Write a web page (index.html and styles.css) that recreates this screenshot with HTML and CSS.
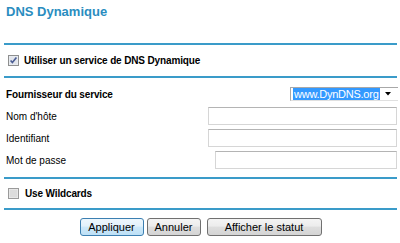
FILE: index.html
```html
<!DOCTYPE html>
<html lang="fr">
<head>
    <meta charset="UTF-8">
    <title>DNS Dynamique</title>
    <link rel="stylesheet" href="styles.css">
</head>
<body>
    <div class="page">
        <h1 class="title">DNS Dynamique</h1>

        <!-- Enable service -->
        <div class="section check-row">
            <svg class="checkbox" width="11" height="11" viewBox="0 0 11 11">
                <rect x="0.5" y="0.5" width="10" height="10" fill="#eef0f4" stroke="#8e8f8f"/>
                <rect x="1.5" y="1.5" width="8" height="8" fill="#e2e5ec"/>
                <path d="M2.6 5.4 L4.4 7.6 L8.4 2.6" fill="none" stroke="#4b5d93" stroke-width="1.6"/>
            </svg>
            <span class="check-label">Utiliser un service de DNS Dynamique</span>
        </div>

        <!-- Account settings -->
        <div class="section fields">
            <div class="field">
                <span class="label bold">Fournisseur du service</span>
                <div class="select">
                    <span class="select-value">www.DynDNS.org</span>
                    <svg class="select-arrow" width="6" height="4" viewBox="0 0 6 4">
                        <path d="M0 0 H6 L3 3.5 Z" fill="#000"/>
                    </svg>
                </div>
            </div>
            <div class="field">
                <span class="label">Nom d'hôte</span>
                <input class="text-input" type="text">
            </div>
            <div class="field">
                <span class="label">Identifiant</span>
                <input class="text-input" type="text">
            </div>
            <div class="field">
                <span class="label">Mot de passe</span>
                <input class="text-input short" type="password">
            </div>
        </div>

        <!-- Wildcards -->
        <div class="section check-row wildcards">
            <svg class="checkbox" width="11" height="11" viewBox="0 0 11 11">
                <rect x="0.5" y="0.5" width="10" height="10" fill="#f2f2f2" stroke="#9a9a9a"/>
                <rect x="1.5" y="1.5" width="8" height="8" fill="#dcdcdc"/>
            </svg>
            <span class="check-label">Use Wildcards</span>
        </div>

        <!-- Actions -->
        <div class="section actions">
            <button class="btn btn-default apply">Appliquer</button>
            <button class="btn cancel">Annuler</button>
            <button class="btn status">Afficher le statut</button>
        </div>
    </div>
</body>
</html>
```

FILE: styles.css
```css
body {
    margin: 0;
    padding: 0;
    background: #ffffff;
    font-family: "Liberation Sans", Arial, sans-serif;
    font-size: 10px;
    color: #000;
}
.page {
    width: 393px;
    padding: 0 3px 0 4px;
}
/* Title */
.title {
    margin: 0 0 23px;
    padding: 4px 0 0 2px;
    font-size: 13px;
    line-height: 16px;
    font-weight: bold;
    color: #2a8dbf;
}
/* Sections */
.section {
    border-top: 2px solid #3a9bc9;
}
.check-row {
    display: flex;
    align-items: center;
    height: 31px;
    padding-left: 4px;
}
.check-row.wildcards {
    height: 29px;
}
.checkbox {
    display: block;
    margin-right: 5px;
}
.wildcards .checkbox {
    margin-right: 6px;
}
.check-label {
    font-weight: bold;
    line-height: 12px;
    letter-spacing: -0.14px;
}
/* Fields */
.fields {
    padding: 5px 0 6px;
}
.field {
    display: flex;
    justify-content: space-between;
    align-items: center;
    height: 22px;
}
.label {
    padding-left: 2px;
}
.bold {
    font-weight: bold;
    letter-spacing: -0.15px;
}
.text-input {
    box-sizing: border-box;
    width: 189px;
    height: 18px;
    margin: 0;
    border: 1px solid #d6d6d6;
    border-top-color: #b4b4b4;
    background: #fff;
}
.text-input.short {
    width: 182px;
}
.select {
    box-sizing: border-box;
    display: flex;
    align-items: center;
    width: 108px;
    height: 14px;
    margin-right: -1px;
    border: 1px solid #a8a8a8;
    border-right: none;
    border-bottom-color: #e0e0e0;
    padding-left: 2px;
}
.select-value {
    background: #3399ff;
    color: #fff;
    font-size: 11px;
    line-height: 12px;
    padding: 0 1px;
    letter-spacing: -0.25px;
}
.select-arrow {
    margin-left: 5px;
}
/* Buttons */
.actions {
    display: flex;
    justify-content: center;
    padding-top: 8px;
}
.btn {
    box-sizing: border-box;
    height: 18px;
    margin: 0;
    padding: 0;
    font-family: "Liberation Sans", Arial, sans-serif;
    font-size: 11px;
    color: #000;
    border: 1px solid #707070;
    border-radius: 3px;
    background: linear-gradient(#f4f4f4 0%, #ececec 45%, #dedede 50%, #d4d4d4 100%);
}
.btn-default {
    border-color: #3c7fb1;
    background: linear-gradient(#eef7fd 0%, #e3f1fb 45%, #cde8f9 50%, #bde0f6 100%);
}
.apply {
    width: 64px;
    margin-right: 3px;
}
.cancel {
    width: 54px;
    margin-right: 6px;
}
.status {
    width: 115px;
}
```
